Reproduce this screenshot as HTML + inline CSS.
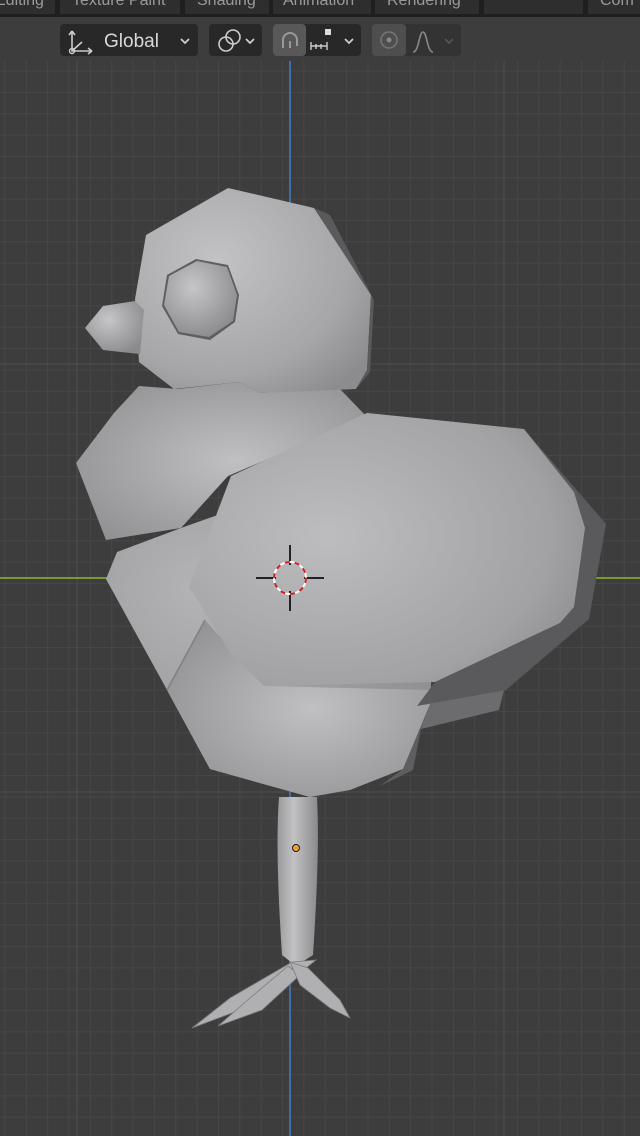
<!DOCTYPE html>
<html><head><meta charset="utf-8"><style>
html,body{margin:0;padding:0;background:#3d3d3d;width:640px;height:1136px;overflow:hidden;font-family:"Liberation Sans",sans-serif}
svg{display:block}
</style></head><body>
<svg width="640" height="1136" viewBox="0 0 640 1136" xmlns="http://www.w3.org/2000/svg">
<defs>
<pattern id="g" x="4.5" y="6.5" width="21.35" height="21.35" patternUnits="userSpaceOnUse">
<path d="M0 0.5H21.35M0.5 0V21.35" stroke="#474747" stroke-width="1" fill="none"/>
</pattern>
<radialGradient id="hg" cx="0.35" cy="0.35" r="0.8"><stop offset="0" stop-color="#c2c2c4"/><stop offset="0.7" stop-color="#a6a6a8"/><stop offset="1" stop-color="#8c8c8e"/></radialGradient>
<radialGradient id="wg" cx="0.35" cy="0.45" r="0.8"><stop offset="0" stop-color="#bdbdbf"/><stop offset="0.7" stop-color="#a2a2a4"/><stop offset="1" stop-color="#858587"/></radialGradient>
<radialGradient id="cg" cx="0.55" cy="0.5" r="0.7"><stop offset="0" stop-color="#c0c0c2"/><stop offset="1" stop-color="#8e8e90"/></radialGradient>
<radialGradient id="bg" cx="0.3" cy="0.3" r="0.9"><stop offset="0" stop-color="#b4b4b6"/><stop offset="1" stop-color="#8a8a8c"/></radialGradient>
<radialGradient id="eg" cx="0.4" cy="0.35" r="0.7"><stop offset="0" stop-color="#c6c6c8"/><stop offset="1" stop-color="#8a8a8c"/></radialGradient>
<linearGradient id="lg" x1="0" x2="1"><stop offset="0" stop-color="#9a9a9c"/><stop offset="0.4" stop-color="#c2c2c4"/><stop offset="1" stop-color="#8a8a8c"/></linearGradient>
</defs>
<rect width="640" height="1136" fill="#3d3d3d"/>
<rect width="640" height="1136" fill="url(#g)"/>
<path d="M77 60V1136M504 60V1136M0 364H640M0 792H640" stroke="#4c4c4c" stroke-width="1.2"/>
<line x1="290" y1="60" x2="290" y2="1136" stroke="#3f6fa6" stroke-width="2"/>
<line x1="0" y1="578" x2="640" y2="578" stroke="#7a9a30" stroke-width="2"/>
<!-- top tabs -->
<rect x="0" y="0" width="640" height="17" fill="#1f1f1f"/>
<g fill="#2e2e2e"><rect x="0" y="0" width="55" height="14"/><rect x="60" y="0" width="120" height="14"/><rect x="185" y="0" width="84" height="14"/><rect x="273" y="0" width="98" height="14"/><rect x="375" y="0" width="104" height="14"/><rect x="484" y="0" width="99" height="14"/><rect x="588" y="0" width="52" height="14"/></g>
<g fill="#9a9a9a" font-size="16"><text x="-5" y="5">Editing</text><text x="72" y="5">Texture Paint</text><text x="197" y="5">Shading</text><text x="283" y="5">Animation</text><text x="387" y="5">Rendering</text><text x="600" y="5">Com</text></g>
<rect x="0" y="17" width="640" height="44" fill="#3d3d3d"/>
<!-- header buttons -->
<rect x="60" y="24" width="138" height="32" rx="4" fill="#282828"/>
<path d="M72 31v20h20M72 31l-3 4M72 31l3 4M92 51l-4-3M92 51l-4 3M72 51l10-9" stroke="#ccc" stroke-width="1.6" fill="none"/>
<circle cx="72" cy="51" r="2.5" fill="none" stroke="#ccc" stroke-width="1.4"/>
<text x="104" y="47" fill="#d8d8d8" font-size="19">Global</text>
<path d="M181 39l4 4 4-4" stroke="#ccc" stroke-width="1.8" fill="none"/>
<rect x="209" y="24" width="53" height="32" rx="4" fill="#282828"/>
<circle cx="226" cy="44" r="7" fill="none" stroke="#ccc" stroke-width="1.6"/><circle cx="233" cy="37" r="7" fill="none" stroke="#ccc" stroke-width="1.6"/>
<path d="M246 39l4 4 4-4" stroke="#ccc" stroke-width="1.8" fill="none"/>
<rect x="273" y="24" width="88" height="32" rx="4" fill="#282828"/>
<rect x="273" y="24" width="33" height="32" rx="4" fill="#585858"/>
<path d="M283 48v-8a7 7 0 0 1 14 0v6M290 48v-7" stroke="#999" stroke-width="2" fill="none"/>
<path d="M311 50v-8M311 46h16M316 49v-5M321 49v-5M327 50v-8" stroke="#ccc" stroke-width="1.4" fill="none"/>
<rect x="325" y="29" width="6" height="6" fill="#ddd"/>
<path d="M345 39l4 4 4-4" stroke="#ccc" stroke-width="1.8" fill="none"/>
<rect x="372" y="24" width="89" height="32" rx="4" fill="#333"/>
<rect x="372" y="24" width="34" height="32" rx="4" fill="#4e4e4e"/>
<circle cx="389" cy="40" r="8" fill="none" stroke="#777" stroke-width="1.5"/><circle cx="389" cy="40" r="2.5" fill="#888"/>
<path d="M413 52c6 0 6-20 10-20s4 20 10 20" stroke="#888" stroke-width="1.6" fill="none"/>
<path d="M445 39l4 4 4-4" stroke="#555" stroke-width="1.8" fill="none"/>
<!-- chick -->
<polygon points="417,706 510,666 499,710 421,729" fill="#6c6c6e"/>
<polygon points="106,579 117,552 181,528 260,500 431,640 431,702 403,769 310,797 210,769 167,690" fill="url(#bg)"/>
<polygon points="205,620 264,686 431,690 431,702 403,769 350,790 310,797 210,769 167,690" fill="url(#cg)"/>
<path d="M205 620L167 690" stroke="#808082" stroke-width="1.5"/>
<polygon points="403,769 431,702 421,729 413,770 380,786" fill="#5e5e60"/>
<polygon points="139,386 178,389 239,382 260,393 339,388 367,417 228,476 181,528 106,540 76,463 114,413" fill="url(#cg)"/>
<polygon points="314,208 371,295 367,370 356,389 260,393 239,382 174,389 139,362 135,299 146,235 228,188" fill="url(#hg)"/>
<polygon points="314,208 330,215 374,300 370,372 356,389 367,370 371,295" fill="#5a5a5c"/>
<polygon points="167,275 196,259 228,265 239,295 235,322 210,340 178,334 162,306" fill="#5e5e60"/>
<polygon points="169,276 197,261 227,267 237,295 233,321 209,337 179,332 164,305" fill="url(#eg)"/>
<polygon points="85,328 103,306 135,301 144,310 140,354 103,350" fill="url(#eg)"/>
<polygon points="524,429 606,524 589,619 506,690 417,706 435,682 560,623 574,607 585,528 574,492" fill="#5a5a5c"/>
<polygon points="189,587 231,476 367,413 524,429 574,492 585,528 574,607 560,623 435,682 264,686 231,654" fill="url(#wg)"/>
<!-- leg -->
<path d="M279 797L317 797Q320 850 313 955L296 966L282 955Q275 850 279 797Z" fill="url(#lg)"/>
<g fill="#b0b0b2" stroke="#7a7a7c" stroke-width="0.8">
<path d="M292 962L316 960L286 984L240 1010L192 1028L230 998Z"/>
<path d="M288 966L300 975L262 1010L218 1026L250 998Z"/>
<path d="M290 962L308 968L340 1000L350 1018L330 1008L300 985Z"/>
</g>
<circle cx="296" cy="848" r="3.5" fill="#f0a030" stroke="#222" stroke-width="1"/>
<!-- cursor -->
<path d="M290 545v20M290 591v20M256 578h20M304 578h20" stroke="#222" stroke-width="2"/>
<circle cx="290" cy="578" r="16" fill="none" stroke="#fff" stroke-width="2"/>
<circle cx="290" cy="578" r="16" fill="none" stroke="#d02020" stroke-width="2" stroke-dasharray="5 5"/>
</svg>
</body></html>
